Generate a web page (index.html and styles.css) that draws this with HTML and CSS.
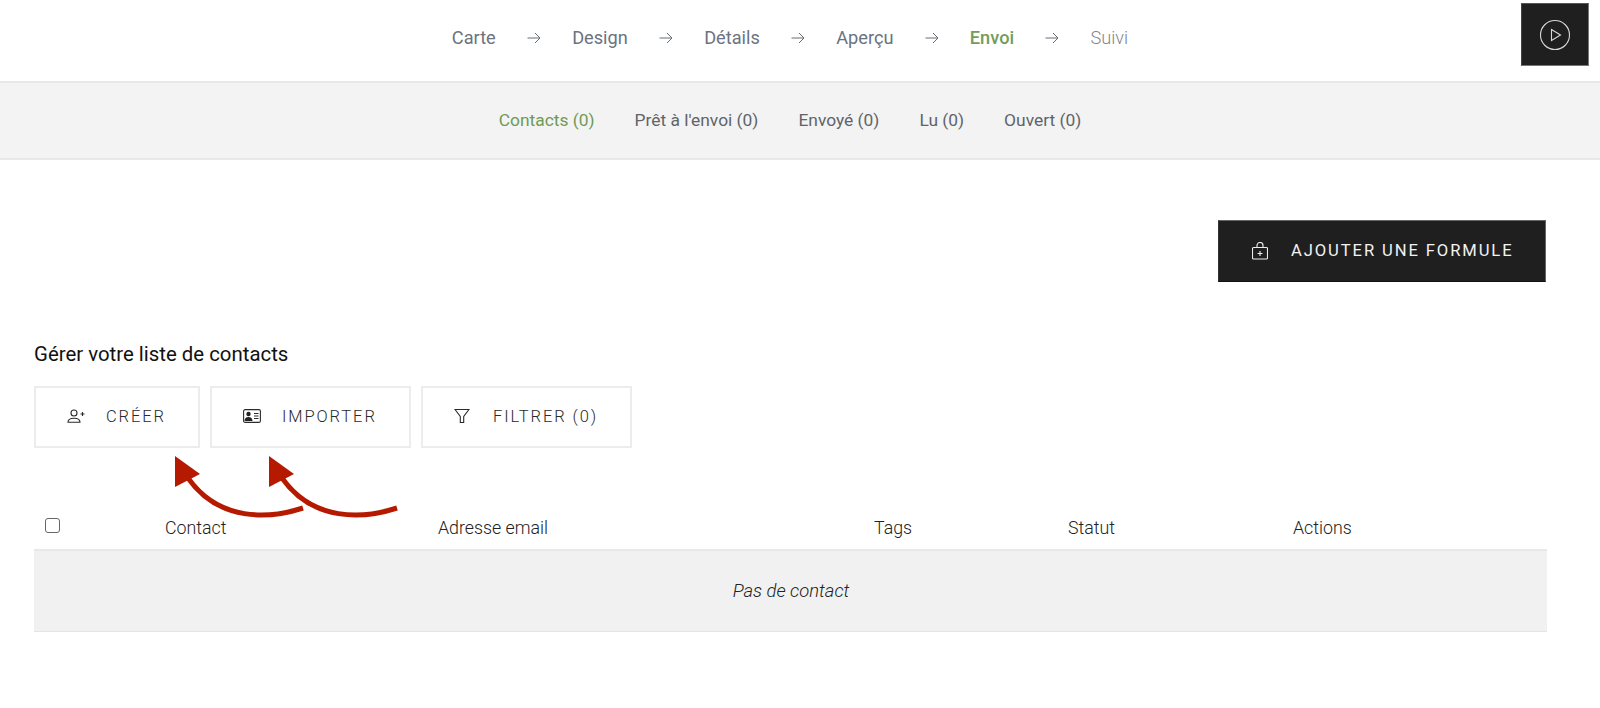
FILE: index.html
```html
<!DOCTYPE html>
<html lang="fr">
<head>
<meta charset="utf-8">
<title>Envoi</title>
<link rel="stylesheet" href="styles.css">
</head>
<body>
<header class="topbar">
  <nav class="steps">
    <span class="step">Carte</span>
    <svg class="arrow" viewBox="0 0 14 12"><path d="M0.5 6H13M8 1l5 5-5 5"/></svg>
    <span class="step">Design</span>
    <svg class="arrow" viewBox="0 0 14 12"><path d="M0.5 6H13M8 1l5 5-5 5"/></svg>
    <span class="step">Détails</span>
    <svg class="arrow" viewBox="0 0 14 12"><path d="M0.5 6H13M8 1l5 5-5 5"/></svg>
    <span class="step">Aperçu</span>
    <svg class="arrow" viewBox="0 0 14 12"><path d="M0.5 6H13M8 1l5 5-5 5"/></svg>
    <span class="step step-active">Envoi</span>
    <svg class="arrow" viewBox="0 0 14 12"><path d="M0.5 6H13M8 1l5 5-5 5"/></svg>
    <span class="step step-muted">Suivi</span>
  </nav>
  <button class="play" type="button" aria-label="Lecture">
    <svg viewBox="0 0 32 32" width="32" height="32"><circle cx="16" cy="16" r="14.5"/><path d="M12.5 10.5v11l9-5.5z"/></svg>
  </button>
</header>

<nav class="tabs">
  <span class="tab tab-active">Contacts (0)</span>
  <span class="tab">Prêt à l'envoi (0)</span>
  <span class="tab">Envoyé (0)</span>
  <span class="tab">Lu (0)</span>
  <span class="tab">Ouvert (0)</span>
</nav>

<main class="content">
  <div class="actions-top">
    <button class="btn btn-dark" type="button">
      <svg class="icon" viewBox="0 0 16 18"><path d="M1.500 5.500h13a1 1 0 0 1 1 1v9.500a1 1 0 0 1-1 1h-13a1 1 0 0 1-1-1v-9.500a1 1 0 0 1 1-1zM5 5.500V3.500a3 3 0 0 1 6 0v2M8 9v5M5.500 11.500h5"/></svg>
      <span class="btn-label">AJOUTER UNE FORMULE</span>
    </button>
  </div>

  <h2 class="section-title">Gérer votre liste de contacts</h2>

  <div class="toolbar">
    <button class="btn btn-light btn-create" type="button">
      <svg class="icon" viewBox="0 0 18 14"><circle cx="7" cy="4" r="3"/><path d="M1 13.200c0-2.700 2.500-4 6-4s6 1.300 6 4zM13.500 5h4M15.500 3v4"/></svg>
      CRÉER
    </button>
    <button class="btn btn-light btn-import" type="button">
      <svg class="icon" viewBox="0 0 18 14"><rect x="0.600" y="0.600" width="16.800" height="12.800" rx="1.500"/><circle class="solid" cx="5.500" cy="5" r="2.200"/><path class="solid" d="M1.500 12c0-2.500 1.700-4 4-4s4 1.500 4 4z"/><path d="M11 4.500h4.500M11 7h4.500M11 9.500h4.500"/></svg>
      IMPORTER
    </button>
    <button class="btn btn-light btn-filter" type="button">
      <svg class="icon icon-filter" viewBox="0 0 16 16"><path d="M1 1.500h14L9.700 8.500V14.500H6.300V8.500z"/></svg>
      FILTRER (0)
    </button>
  </div>

  <section class="table">
    <div class="thead">
      <span class="check"></span>
      <span>Contact</span>
      <span>Adresse email</span>
      <span>Tags</span>
      <span>Statut</span>
      <span>Actions</span>
    </div>
    <div class="empty">Pas de contact</div>
  </section>

  <svg class="annot" viewBox="0 0 240 70" aria-hidden="true">
    <path class="annot-line" d="M129 52C95 63 45 66 14 22"/>
    <path class="annot-head" d="M1 0L26 18 1 31z"/>
    <path class="annot-line" d="M223 52C189 63 139 66 108 22"/>
    <path class="annot-head" d="M95 0L120 18 95 31z"/>
  </svg>
</main>
</body>
</html>
```
FILE: styles.css
```css
* { box-sizing: border-box; }
html, body { margin: 0; height: 100%; }
body {
  background: #fff;
  font-family: Roboto, "Liberation Sans", sans-serif;
  color: #1f1f1f;
  overflow: hidden;
}
.topbar {
  position: relative;
  height: 83px;
  border-bottom: 2px solid #e8e8e8;
  display: flex;
  justify-content: center;
  align-items: center;
  padding-right: 20px;
  padding-bottom: 6px;
}
.steps { display: flex; align-items: center; gap: 31.200px; font-size: 18.200px; }
.step { color: #6b7280; }
.step-active { color: #739c5b; font-weight: 500; }
.step-muted { color: #7f858e; font-weight: 300; font-size: 18.200px; margin-top: -1px; }
.arrow { width: 14px; height: 12px; fill: none; stroke: #666c75; stroke-width: 1; }
.play {
  position: absolute;
  left: 1521px;
  top: 3px;
  width: 68px;
  height: 63px;
  padding: 0;
  display: flex;
  align-items: center;
  justify-content: center;
  background: #1f1f1f;
  border: 1px solid #777;
  border-top-color: #555;
  border-left-color: #444;
}
.play svg { fill: none; stroke: #d8d8d8; stroke-width: 1.100; }
.tabs {
  height: 77px;
  background: #f3f3f3;
  border-bottom: 2px solid #e8e8e8;
  display: flex;
  justify-content: center;
  align-items: center;
  gap: 40px;
  padding-right: 20px;
  padding-bottom: 2px;
  font-size: 17.400px;
  color: #60646a;
}
.tab-active { color: #6f9a55; }
.content { position: relative; padding: 60px 53px 0 34px; }
.actions-top { display: flex; justify-content: flex-end; }
.btn {
  display: inline-flex;
  align-items: center;
  height: 62px;
  font-family: inherit;
  letter-spacing: 1.900px;
  cursor: pointer;
}
.btn-dark {
  width: 328px;
  padding: 0 0 0 33px;
  gap: 23px;
  background: #1f1f1f;
  color: #f2f2f2;
  border: 1px solid #666;
  border-left-color: #333;
  border-bottom-color: #111;
  font-size: 16.600px;
  font-weight: 400;
  margin-right: 1px;
}
.btn-label { margin-top: -2px; }
.btn-dark .icon { width: 16px; height: 18px; stroke: #eee; }
.icon { fill: none; stroke: currentColor; stroke-width: 1.100; flex: none; }
.section-title {
  margin: 60px 0 0;
  height: 24px;
  line-height: 24px;
  font-size: 20.400px;
  font-weight: 400;
  color: #111;
}
.toolbar { display: flex; gap: 10px; margin-top: 20px; }
.btn-light {
  padding: 0 0 2px 31px;
  gap: 21px;
  background: #fff;
  color: #2a2a2a;
  border: 2px solid #ececec;
  font-size: 16.500px;
  font-weight: 300;
}
.btn-light .icon { width: 18px; height: 14px; }
.btn-create { width: 166px; }
.btn-import { width: 201px; }
.btn-filter { width: 211px; }
.icon-filter { width: 16px !important; height: 16px !important; margin-right: 2px; }
.solid { fill: #222; stroke: none; }
.table { margin-top: 59px; }
.thead {
  display: grid;
  grid-template-columns: 131px 273px 436px 194px 225px 1fr;
  align-items: center;
  height: 44px;
  padding-bottom: 1px;
  border-bottom: 2px solid #e6e8ea;
  font-size: 17.800px;
  font-weight: 300;
  color: #222;
}
.check {
  width: 15px;
  height: 15px;
  margin: -4px 0 0 11px;
  border: 1px solid #666;
  border-radius: 3px;
}
.empty {
  height: 81px;
  display: flex;
  align-items: center;
  justify-content: center;
  padding: 0 0 2px 1px;
  background: #f1f1f1;
  border-bottom: 1px solid #e4e4e4;
  font-size: 18.400px;
  font-weight: 300;
  font-style: italic;
  color: #222;
}
.annot {
  position: absolute;
  left: 174px;
  top: 296px;
  width: 240px;
  height: 70px;
  overflow: visible;
}
.annot-line { fill: none; stroke: #b51a00; stroke-width: 5; }
.annot-head { fill: #b51a00; }
```
